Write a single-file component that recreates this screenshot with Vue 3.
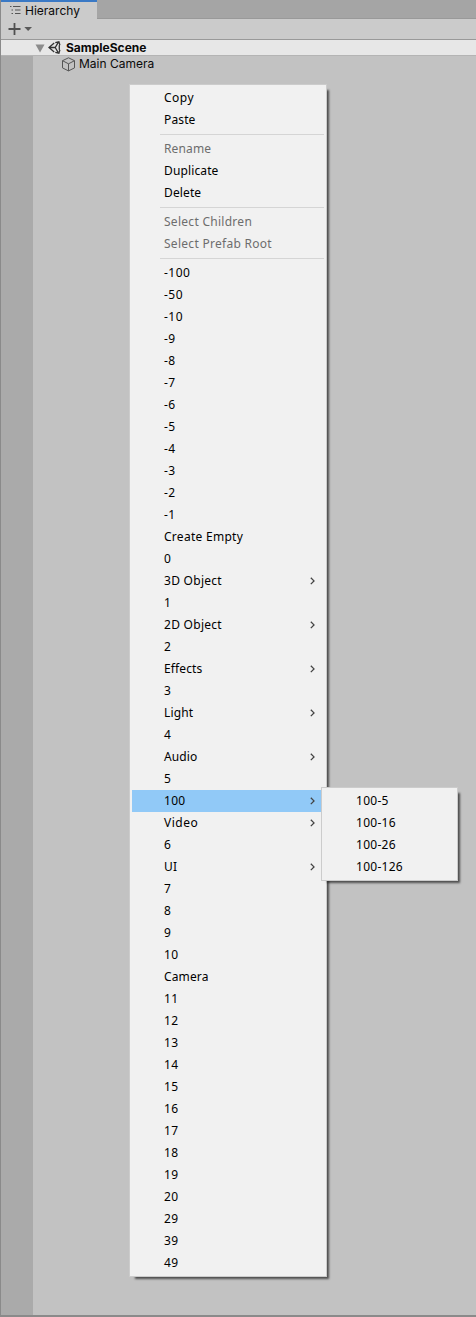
<script setup>
const sub = new Set(['3D Object', '2D Object', 'Effects', 'Light', 'Audio', '100', 'Video', 'UI'])
const groups = [
  { items: ['Copy', 'Paste'] },
  { items: ['Rename', 'Duplicate', 'Delete'] },
  { items: ['Select Children', 'Select Prefab Root'] },
  {
    items: [
      '-100', '-50', '-10', '-9', '-8', '-7', '-6', '-5', '-4', '-3', '-2', '-1',
      'Create Empty', '0', '3D Object', '1', '2D Object', '2', 'Effects', '3', 'Light', '4',
      'Audio', '5', '100', 'Video', '6', 'UI', '7', '8', '9', '10', 'Camera',
      '11', '12', '13', '14', '15', '16', '17', '18', '19', '20', '29', '39', '49',
    ],
  },
]
const disabled = new Set(['Rename', 'Select Children', 'Select Prefab Root'])
const children = ['100-5', '100-16', '100-26', '100-126']
const spacing = (t) => {
  if (t.startsWith('-') || t === 'Copy' || t === 'Video') return 'loose'
  return t.includes(' ') || /^\d/.test(t) ? 'spaced' : ''
}
</script>

<template>
  <div class="panel">
    <div class="tabs">
      <div class="tab">
        <svg class="list" width="12" height="10" viewBox="0 0 12 10">
          <path d="M0 1.500h1.500M3 1.500h7.500M1.500 5h1.500M5 5h5.500M1.500 8.500h1.500M5 8.500h5.500" fill="none" stroke="#555" />
        </svg>
        <span>Hierarchy</span>
      </div>
    </div>
    <div class="toolbar">
      <svg width="24" height="14" viewBox="0 0 24 14">
        <path d="M6.500 1v12M.5 7h12" stroke="#505050" stroke-width="1.800" />
        <path d="M16.300 5h7.700l-3.850 4z" fill="#5a5a5a" />
      </svg>
    </div>
    <div class="scene">
      <svg class="fold" width="10" height="9" viewBox="0 0 10 9"><path d="M.5 .5h9L5 8.500z" fill="#8c8c8c" /></svg>
      <svg class="unity" width="13" height="13" viewBox="0 0 13 13">
        <path d="M6.200 2.100L1 6.500l5.200 4.400M1 6.500h6.200l2.900-4.800M7.200 6.500l2.900 4.800M7.300 1.700l3.600-.9 1 3.500M7.300 11.300l3.600.9 1-3.500M11.300 4.300v4.400" fill="none" stroke="#333" stroke-width="1.300" />
      </svg>
      <b>SampleScene</b>
    </div>
    <div class="body">
      <div class="gutter"></div>
      <div class="object">
        <svg width="15" height="15" viewBox="0 0 15 15">
          <path d="M7.500 .8l6 2.900v7.200l-6 3-6-3V3.700zM1.500 3.700l6 3.100 6-3.100M7.500 6.800v7.100" fill="none" stroke="#555" stroke-width="1" stroke-linejoin="round" />
        </svg>
        <span>Main Camera</span>
      </div>
    </div>

    <div class="menu main">
      <div v-for="(g, i) in groups" :key="i" class="group">
        <div v-for="t in g.items" :key="t" class="row" :class="[spacing(t), { off: disabled.has(t), hot: t === '100' }]">
          <span>{{ t }}</span>
          <svg v-if="sub.has(t)" width="5" height="8" viewBox="0 0 5 8">
            <path d="M.8 .7L4 3.900.8 7.100" fill="none" stroke="#444" stroke-width="1.300" />
          </svg>
        </div>
      </div>
    </div>
    <div class="menu child">
      <div v-for="t in children" :key="t" class="row spaced"><span>{{ t }}</span></div>
    </div>
  </div>
</template>

<style>
body { margin: 0; }
</style>

<style scoped>
.panel {
  position: relative;
  box-sizing: border-box;
  width: 476px;
  height: 1317px;
  display: flex;
  flex-direction: column;
  overflow: hidden;
  background: #c2c2c2;
  border-left: 1px solid #8a8a8a;
  border-bottom: 2px solid #8a8a8a;
  font: 12px/16px Inter, "Liberation Sans", sans-serif;
  color: #0a0a0a;
}
.tabs { height: 19px; box-sizing: border-box; background: #a5a5a5; border-bottom: 1px solid #999; display: flex; flex: none; }
.tab {
  box-sizing: border-box;
  width: 96px;
  height: 19px;
  background: #cbcbcb;
  border-top: 2px solid #3a79c5;
  display: flex;
  padding-left: 9px;
  line-height: 18px;
}
.tab span { margin-left: 3px; }
.list { margin-top: 3px; }
.toolbar { height: 21px; box-sizing: border-box; flex: none; background: #cbcbcb; border-bottom: 1px solid #999; padding: 3px 0 0 7px; display: flex; }
.scene { height: 16px; box-sizing: border-box; flex: none; background: #e7e7e7; border-bottom: 1px solid #b4b4b4; display: flex; padding-left: 33px; }
.scene b { margin-left: 5px; font-weight: 700; line-height: 16px; }
.fold { margin: 4px 0 0 1px; }
.unity { margin: 1px 0 0 3px; }
.body { flex: 1; display: flex; }
.gutter { width: 32px; background: #aaa; }
.object { display: flex; height: 16px; padding-left: 28px; }
.object svg { margin-top: 1px; }
.object span { margin-left: 3px; }

.menu {
  position: absolute;
  box-sizing: border-box;
  padding: 2px;
  border: 1px solid #ccc;
  background: #f1f1f1;
  box-shadow: 4px 4px 2px -2px rgba(0, 0, 0, 0.6);
  font: 12px/22px "Noto Sans", "Open Sans", sans-serif;
  letter-spacing: 0.13px;
  color: #000;
}
.main { left: 128px; top: 84px; width: 198px; }
.child { left: 320px; top: 787px; width: 137px; }
.group + .group::before {
  content: "";
  display: block;
  height: 1px;
  margin: 3px 0 3px 28px;
  background: #d5d5d5;
}
.row { display: flex; align-items: center; justify-content: space-between; height: 22px; padding: 0 9px 0 32px; white-space: nowrap; }
.spaced { letter-spacing: 0.28px; }
.loose { letter-spacing: 0.5px; }
.off { color: #6d6d6d; }
.hot { background: #91c9f7; }
</style>
